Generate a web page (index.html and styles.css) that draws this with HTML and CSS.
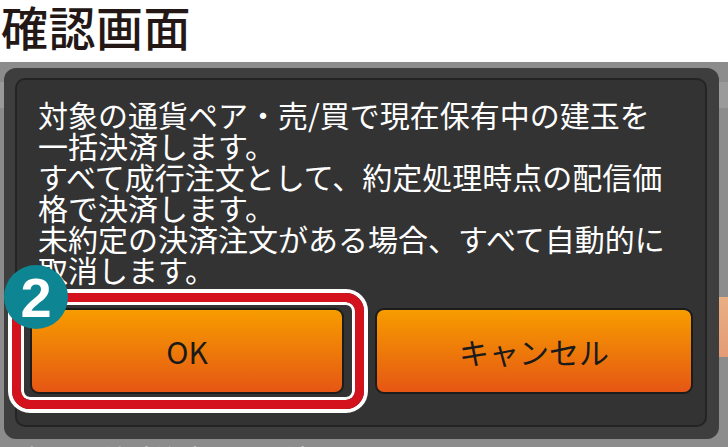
FILE: index.html
```html
<!DOCTYPE html>
<html lang="ja">
<head>
  <meta charset="UTF-8" />
  <meta name="viewport" content="width=device-width, initial-scale=1.0"/>
  <title>確認画面</title>
  <link rel="stylesheet" href="styles.css">
</head>
<body>
  <h1 class="title">確認画面</h1>
  <div class="screen">
    <div class="dialog">
      <div class="panel">
        <p class="message">対象の通貨ペア・売/買で現在保有中の建玉を<br>一括決済します。<br>すべて成行注文として、約定処理時点の配信価<br>格で決済します。<br>未約定の決済注文がある場合、すべて自動的に<br>取消します。</p>
        <div class="actions">
          <div class="focus">
            <button class="btn">OK</button>
            <span class="ring"></span>
            <span class="badge">2</span>
          </div>
          <button class="btn">キャンセル</button>
        </div>
      </div>
    </div>
    <div class="behind">の処理（決済注文）を取消します</div>
  </div>
</body>
</html>
```

FILE: styles.css
```css
body {
  margin: 0;
  background: #fff;
  font-family: "Noto Sans CJK JP", "Noto Sans", sans-serif;
  width: 728px;
  height: 447px;
  overflow: hidden;
}
.title {
  margin: 0;
  height: 62px;
  font-size: 47px;
  line-height: 52px;
  font-weight: 500;
  color: #231815;
  padding-left: 1px;
  letter-spacing: 0.5px;
}
.screen {
  height: 385px;
  overflow: hidden;
  background:
    linear-gradient(#e9ae82, #e49c76) right 0 top 235px / 9px 60px no-repeat,
    linear-gradient(#9a9a9a, #9a9a9a) 0 20px / 100% 26px no-repeat,
    #8c8c8c;
  padding-top: 6px;
}
.dialog {
  margin-left: 4px;
  width: 715px;
  height: 371px;
  box-sizing: border-box;
  padding: 10px 12px 12px 11px;
  background: #3e3e3e;
  border-radius: 12px;
}
.panel {
  height: 100%;
  box-sizing: border-box;
  background: #333;
  border: 2px solid #242424;
  border-radius: 10px;
}
.message {
  margin: 0;
  padding: 19px 0 0 21px;
  color: #fff;
  font-size: 30px;
  line-height: 31px;
  white-space: nowrap;
}
.actions {
  display: flex;
  gap: 31px;
  margin-top: 23px;
  padding: 0 12px 0 13px;
}
.focus {
  position: relative;
  flex: 1;
  display: flex;
}
.btn {
  flex: 1;
  height: 86px;
  border: 2px solid #1c1c1c;
  border-radius: 9px;
  background: linear-gradient(#f79c00, #ee7a0a 50%, #e65614);
  color: #1a1a1a;
  font-family: "Noto Sans CJK JP", "Noto Sans", sans-serif;
  font-size: 30px;
  padding: 0;
}
.ring {
  position: absolute;
  top: -15px;
  bottom: -15px;
  left: -18px;
  right: -20px;
  border: 9px solid #d3121d;
  border-radius: 18px;
  box-shadow: 0 0 0 4px #fff, inset 0 0 0 3px #fff;
}
.badge {
  position: absolute;
  left: -26px;
  top: -43px;
  width: 64px;
  height: 64px;
  border-radius: 50%;
  background: #0d8592;
  color: #fff;
  font-family: "Liberation Sans", Arial, sans-serif;
  font-weight: 700;
  font-size: 56px;
  line-height: 66px;
  text-align: center;
}
.behind {
  margin-top: 4px;
  color: #e8e8e8;
  font-size: 26px;
  line-height: 30px;
  white-space: nowrap;
}
```
